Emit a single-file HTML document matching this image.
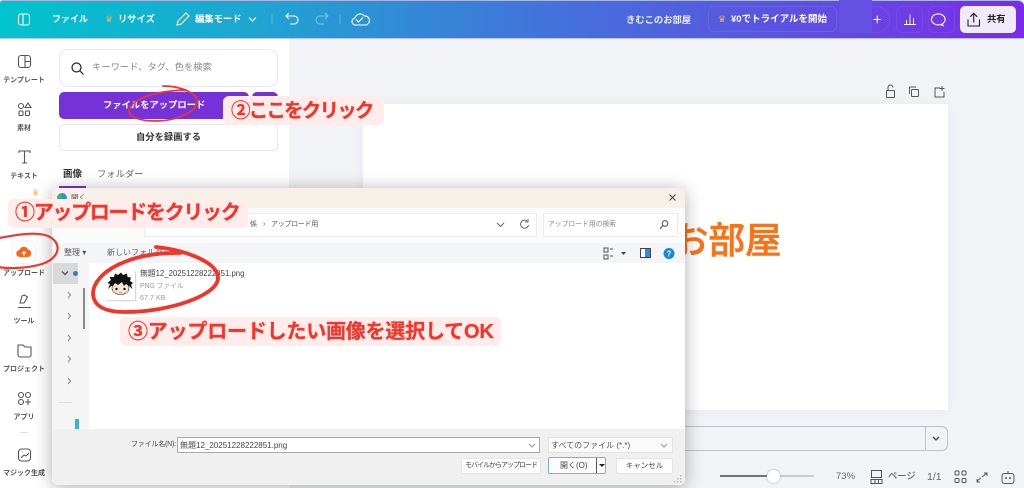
<!DOCTYPE html>
<html lang="ja"><head><meta charset="utf-8"><style>
html,body{margin:0;padding:0}
body{width:1024px;height:488px;overflow:hidden;position:relative;background:#f2f3f7;font-family:"Liberation Sans","Noto Sans CJK JP",sans-serif;color:#333;filter:blur(.3px)}
.a{position:absolute;white-space:nowrap;line-height:1}
.c{transform:translateX(-50%)}
svg{position:absolute;overflow:visible}
.w{color:#fff;font-weight:700}
.n{font-size:7px;font-weight:700;color:#555;left:24px}
.lb{position:absolute;background:#ffeceb;border-radius:6px}
.r{color:#f5352b;font-weight:700;position:absolute;white-space:nowrap;line-height:1;-webkit-text-stroke:.3px #f5352b}
.g{color:#666}
.btn{position:absolute;background:#fdfdfd;border:1px solid #e4e4e4;border-radius:2px;box-sizing:border-box;font-size:7px;text-align:center;color:#444}
</style></head><body>

<!-- top bar -->
<div class="a" style="left:0;top:0;width:1024px;height:38px;background:linear-gradient(90deg,#00c4cc 0%,#1fa5d2 25%,#3f78da 50%,#5a55e0 75%,#7d2ae8 100%);border-top:1px solid #a9b6e0;box-sizing:border-box;border-radius:3px 6px 0 0"></div>
<div class="a" style="left:0;top:38px;width:1024px;height:1px;background:#b9c4ea"></div>
<svg style="left:0;top:0" width="1024" height="38" fill="none" stroke="#fff" stroke-width="1.1">
<rect x="18.500" y="14" width="11" height="11" rx="2.500"/><path d="M23 14v11"/>
<path d="M177 25l1-4 8-8 3 3-8 8z"/>
<path d="M249 17.500l3.500 3.500 3.500-3.500"/>
<path d="M289 14l-3 3 3 3M286 17h8a4 4 0 0 1 0 8h-4" transform="translate(0,-1)"/>
<path d="M325 14l3 3-3 3M328 17h-8a4 4 0 0 0 0 8h4" transform="translate(0,-1)" opacity=".4"/>
<path d="M272 14v10M340 14v10" opacity=".25"/>
<path d="M356 25a3.500 3.500 0 0 1-1-7 5.500 5.500 0 0 1 9.500-2 4.500 4.500 0 0 1 1 9z"/><path d="M356 19.500l2.500 2.500 4.500-4.500"/>
<path d="M904 24.500h12M906.500 24v-4M910 24V14.500M913.500 24v-6" stroke-width=".9"/>
<path d="M944 26l-1-1.500a6.800 5.500 0 1 0-1.500.6z" transform="translate(-1,-.5)"/>
</svg>
<div class="a w" style="left:52px;top:14.500px;font-size:9px">ファイル</div>
<div class="a" style="left:105px;top:15px;font-size:9px;color:#f5b14a">♛</div>
<div class="a w" style="left:118px;top:14.500px;font-size:9.300px">リサイズ</div>
<div class="a w" style="left:195px;top:14.500px;font-size:9.300px">編集モード</div>
<div class="a w" style="left:626px;top:15.500px;font-size:9.300px;color:#e8ecfb">きむこのお部屋</div>
<div class="a" style="left:708px;top:6px;width:129px;height:26px;border:1px solid #6b62e4;border-radius:6px;box-sizing:border-box"></div>
<div class="a" style="left:718px;top:15px;font-size:9px;color:#f5b14a">♛</div>
<div class="a w" style="left:731px;top:14.500px;font-size:9.500px">¥0でトライアルを開始</div>
<div class="a" style="left:862px;top:6px;width:28px;height:27px;border:1px solid #7450e6;border-left:0;border-radius:0 14px 14px 0;box-sizing:border-box"></div>
<div class="a" style="left:839px;top:0;width:33px;height:33px;background:#6450e2"></div>
<svg style="left:0;top:0" width="1024" height="38" fill="none" stroke="#fff" stroke-width="1.1"><path d="M873.500 19.500h7.500M877.250 15.700v7.500"/></svg>
<div class="a" style="left:896px;top:6px;width:27px;height:27px;border:1px solid #7a48e8;border-radius:6px;box-sizing:border-box"></div>
<div class="a" style="left:928px;top:6px;width:27px;height:27px;border:1px solid #7c44e8;border-radius:6px;box-sizing:border-box"></div>
<div class="a" style="left:960px;top:6px;width:56px;height:27px;background:#f1eafb;border-radius:5px"></div>
<svg style="left:965px;top:10px" width="20" height="20" fill="none" stroke="#222" stroke-width="1.100"><path d="M3 9.500v6.500h11.500V9.500M8.700 12.500V3.500M5.200 6.800l3.500-3.500 3.500 3.500"/></svg>
<div class="a" style="left:987px;top:14.500px;font-size:9.300px;font-weight:700;color:#222">共有</div>

<!-- left panel -->
<div class="a" style="left:0;top:39px;width:289px;height:449px;background:#fff"></div>
<div class="a" style="left:59px;top:49px;width:219px;height:38px;border:1px solid #e8e6f8;border-radius:9px;box-sizing:border-box"></div>
<svg style="left:70px;top:61px" width="16" height="16" fill="none" stroke="#222" stroke-width="1.200"><circle cx="6.500" cy="6.500" r="4.500"/><path d="M10 10l3.500 3.500"/></svg>
<div class="a" style="left:92px;top:63px;font-size:9.300px;color:#888">キーワード、タグ、色を検索</div>
<div class="a" style="left:59px;top:92px;width:190px;height:27px;background:#7731d8;border-radius:5px"></div>
<div class="a" style="left:252px;top:92px;width:26px;height:27px;background:#7731d8;border-radius:5px"></div>
<div class="a w" style="left:103px;top:100.500px;font-size:9.300px">ファイルをアップロード</div>
<div class="a" style="left:59px;top:124px;width:219px;height:27px;background:#fff;border:1px solid #e6e6e6;border-radius:5px;box-sizing:border-box"></div>
<div class="a" style="left:136px;top:132.500px;font-size:9.300px;font-weight:700;color:#333">自分を録画する</div>
<div class="a" style="left:63px;top:170px;font-size:9.500px;font-weight:700;color:#333">画像</div>
<div class="a" style="left:97px;top:170px;font-size:9.300px;color:#666">フォルダー</div>
<div class="a" style="left:59px;top:186px;width:27px;height:2px;background:#7731d8"></div>

<!-- rail -->
<svg style="left:0;top:40px" width="50" height="448" fill="none" stroke="#555" stroke-width="1.100">
<rect x="18.500" y="15.500" width="12" height="12" rx="2.500"/><path d="M25 16v11M25 21.500h5"/>
<circle cx="21" cy="66" r="2.500"/><path d="M28 63l3 4.500h-6z"/><rect x="19" y="71" width="4" height="4.500" rx="1"/><rect x="25.500" y="71" width="4" height="4.500" rx="1"/>
<path d="M19 113v-2h11v2M24.500 111v12M22 123h5"/>
<path d="M20 264l2-7 2.500-1 3 2-3.500 6zM18 268.500h13" transform="translate(0,-1)"/>
<path d="M18 305h5l2 2h6v8a2 2 0 0 1-2 2H20a2 2 0 0 1-2-2z"/>
<circle cx="21" cy="355" r="2.500"/><circle cx="28" cy="355" r="2.500"/><circle cx="21" cy="362" r="2.500"/><path d="M28 359v6M25 362h6"/>
<rect x="18.500" y="409" width="12" height="12" rx="3"/><path d="M21 418l3-3 2 1 3-3M22 412h.5"/>
</svg>
<div class="a c n" style="top:77px">テンプレート</div>
<div class="a c n" style="top:125px">素材</div>
<div class="a c n" style="top:173px">テキスト</div>
<div class="a" style="left:32px;top:189px;font-size:8px;color:#f3b24c">♛</div>
<div class="a" style="left:13px;top:241px;width:22px;height:22px;background:#fff;border-radius:6px;box-shadow:0 0 2px #ddd"></div>
<svg style="left:16px;top:245px" width="16" height="14"><path d="M4 12a3.500 3.500 0 0 1-.5-7A4.500 4.500 0 0 1 12 4.500a3.800 3.800 0 0 1 0 7.500z" fill="#f9661e"/><path d="M8 11V7M6 8.500L8 6.500l2 2" stroke="#fff" fill="none" stroke-width="1.100"/></svg>
<div class="a c n" style="top:270px">アップロード</div>
<div class="a c n" style="top:318px">ツール</div>
<div class="a c n" style="top:366px">プロジェクト</div>
<div class="a c n" style="top:414px">アプリ</div>
<div class="a" style="left:20px;top:432px;width:8px;height:1px;background:#ddd"></div>
<div class="a c n" style="top:470px">マジック生成</div>

<!-- canvas -->
<div class="a" style="left:363px;top:104px;width:585px;height:306px;background:#fff;box-shadow:0 0 12px rgba(80,80,120,.06)"></div>
<svg style="left:880px;top:82px" width="70" height="20" fill="none" stroke="#555" stroke-width="1">
<rect x="6.500" y="8.500" width="8" height="7" rx="1"/><path d="M8 8V5.500a2.500 2.500 0 0 1 5 0"/>
<rect x="31.500" y="7.500" width="7" height="7" rx="1"/><path d="M29.500 12V6a1 1 0 0 1 1-1H36"/>
<path d="M60 6h-5v9h9v-5M62 4v5M59.500 6.500h5"/></svg>
<div class="a" style="left:672px;top:223px;font-size:36.500px;font-weight:500;color:#f97316;-webkit-text-stroke:.5px #f97316">お部屋</div>
<div class="a" style="left:600px;top:426px;width:348px;height:25px;border:1px solid #bfc2c9;border-radius:6px;box-sizing:border-box"></div>
<div class="a" style="left:925px;top:426px;width:1px;height:25px;background:#bfc2c9"></div>
<svg style="left:930px;top:434px" width="12" height="10" fill="none" stroke="#444" stroke-width="1.300"><path d="M3 3l3 3 3-3"/></svg>

<!-- bottom bar -->
<div class="a" style="left:720px;top:475px;width:94px;height:1.500px;background:#c9cbd2"></div>
<div class="a" style="left:720px;top:475px;width:50px;height:1.500px;background:#70727a"></div>
<div class="a" style="left:767px;top:470px;width:13px;height:13px;background:#fff;border-radius:50%;box-shadow:0 0 2px #999"></div>
<div class="a g" style="left:836px;top:471.500px;font-size:9.500px;font-weight:500">73%</div>
<svg style="left:870px;top:469px" width="150" height="18" fill="none" stroke="#555" stroke-width="1">
<rect x="1.500" y="1.500" width="10" height="7"/><path d="M1 10.500h11v4H1zM5 10.500v4M8.500 10.500v4"/>
<rect x="85" y="2" width="4" height="4" rx="1"/><rect x="92" y="2" width="4" height="4" rx="1"/><rect x="85" y="9.500" width="4" height="4" rx="1"/><rect x="92" y="9.500" width="4" height="4" rx="1"/>
<path d="M112 7l5-4M114 3h3v3M107 11l4-3M107 9v3h3" transform="translate(0,1)"/>
<rect x="132" y="4.500" width="12" height="10" rx="2.500"/><path d="M138 4.500V2"/><circle cx="136" cy="9" r=".5"/><circle cx="140" cy="9" r=".5"/></svg>
<div class="a g" style="left:888px;top:471.500px;font-size:9.300px;font-weight:500">ページ</div>
<div class="a g" style="left:927px;top:471.500px;font-size:10.500px;font-weight:500">1/1</div>

<!-- dialog -->
<div class="a" style="left:52px;top:188px;width:633px;height:297px;background:#fff;border-radius:6px;box-shadow:0 2px 18px rgba(0,0,0,.32);overflow:hidden">
  <div class="a" style="left:0;top:0;width:633px;height:20px;background:#f7f0e8"></div>
  <div class="a" style="left:5px;top:5px;width:10px;height:10px;border-radius:50%;background:conic-gradient(#2c8fd8 0 55%,#33b56b 55% 100%)"></div>
  <div class="a" style="left:19px;top:6px;font-size:7.500px;color:#555">開く</div>
  <svg style="left:616px;top:5px" width="10" height="10" fill="none" stroke="#444" stroke-width="1"><path d="M1.500 1.500l6 6M7.500 1.500l-6 6"/></svg>
  <div class="a" style="left:0;top:20px;width:633px;height:35px;background:#fbfbfc"></div>
  <div class="a" style="left:92px;top:25px;width:393px;height:24px;background:#fff;border:1px solid #ececec;box-sizing:border-box"></div>
  <div class="a" style="left:198px;top:33px;font-size:7px;color:#555">係</div>
  <div class="a" style="left:211px;top:33px;font-size:7px;color:#555">›</div>
  <div class="a" style="left:219px;top:33px;font-size:7px;letter-spacing:-.3px;color:#555">アップロード用</div>
  <svg style="left:444px;top:30px" width="60" height="14" fill="none" stroke="#666" stroke-width="1"><path d="M1 5l3.500 3.500L8 5"/><path d="M31 3a4 4 0 1 0 1.500 4M32 1v3h-3"/></svg>
  <div class="a" style="left:491px;top:25px;width:135px;height:24px;background:#fff;border:1px solid #ececec;box-sizing:border-box"></div>
  <div class="a" style="left:496px;top:33.500px;font-size:6.800px;color:#888">アップロード用の検索</div>
  <svg style="left:606px;top:31px" width="12" height="12" fill="none" stroke="#555" stroke-width="1.100"><circle cx="7" cy="4.500" r="2.800"/><path d="M5 6.500L2 10"/></svg>
  <div class="a" style="left:0;top:55px;width:633px;height:20px;background:#f4f5f7"></div>
  <div class="a" style="left:12px;top:61px;font-size:8px;color:#555">整理 ▾</div>
  <div class="a" style="left:55px;top:61px;font-size:8px;color:#666">新しいフォルダー</div>
  <svg style="left:550px;top:58px" width="78" height="15"><path d="M2 2h4v4H2zM2 9h4v4H2zM8 3h3M8 10h3" fill="none" stroke="#555"/><path d="M19 6h5l-2.500 3z" fill="#444"/><rect x="38.500" y="2.500" width="10" height="9" fill="#fff" stroke="#444"/><rect x="43" y="3" width="5" height="8" fill="#2b90d9"/><circle cx="67" cy="7.500" r="5.500" fill="#1a87dc"/><text x="67" y="10.500" font-size="8" font-weight="700" fill="#fff" text-anchor="middle">?</text></svg>
  <div class="a" style="left:0;top:75px;width:37px;height:166px;background:#f5f5f6"></div>
  <div class="a" style="left:1px;top:75px;width:25px;height:21px;background:#d9d9d9"></div>
  <svg style="left:7px;top:80px" width="22" height="130" fill="none" stroke="#888" stroke-width="1">
    <path d="M3 3.500l3 3 3-3" stroke="#444" stroke-width="1.200"/><circle cx="16.500" cy="5.500" r="2.500" fill="#2a7be0" stroke="none"/>
    <path d="M9 24l2.500 3L9 30M9 45l2.500 3L9 51M9 67l2.500 3L9 73M9 88l2.500 3L9 94M9 110l2.500 3L9 116"/></svg>
  <div class="a" style="left:31px;top:100px;width:2px;height:41px;background:#8a8a8a"></div>
  <div class="a" style="left:7px;top:214px;width:13px;height:1px;background:#ddd"></div>
  <div class="a" style="left:23px;top:231px;width:4px;height:10px;background:#38b6d8"></div>
  <div class="a" style="left:0;top:241px;width:633px;height:56px;background:#f0f0f0"></div>
  <div class="a" style="left:79px;top:253px;font-size:7px;letter-spacing:-.2px;color:#444">ファイル名(N):</div>
  <div class="a" style="left:125px;top:249px;width:363px;height:16px;background:#fff;border:1px solid #aaa;box-sizing:border-box;font-size:8px;line-height:15px;padding-left:2px;color:#444">無題12_20251228222851.png</div>
  <svg style="left:476px;top:254px" width="10" height="8" fill="none" stroke="#999"><path d="M1 2l3 3 3-3"/></svg>
  <div class="a" style="left:496px;top:249px;width:125px;height:16px;background:#fafafa;border:1px solid #e2e2e2;box-sizing:border-box;font-size:8px;line-height:15px;padding-left:2px;color:#555">すべてのファイル (*.*)</div>
  <svg style="left:608px;top:254px" width="10" height="8" fill="none" stroke="#999"><path d="M1 2l3 3 3-3"/></svg>
  <div class="btn" style="left:409px;top:270px;width:80px;height:16px;line-height:14px;letter-spacing:-1px">モバイルからアップロード</div>
  <div class="btn" style="left:496px;top:269px;width:58px;height:17px;line-height:15px;border-color:#7ab0dc;text-align:left;padding-left:11px;font-size:8px">開く(O)</div>
  <div class="a" style="left:544px;top:270px;width:1px;height:15px;background:#555"></div>
  <svg style="left:546px;top:275px" width="8" height="6"><path d="M1 1h6L4 4z" fill="#222"/></svg>
  <div class="btn" style="left:564px;top:270px;width:57px;height:16px;line-height:14px;font-size:7.500px">キャンセル</div>
  <svg style="left:622px;top:287px" width="9" height="9" fill="#bbb"><rect x="6" y="0" width="1.500" height="1.500"/><rect x="3" y="3" width="1.500" height="1.500"/><rect x="6" y="3" width="1.500" height="1.500"/><rect x="0" y="6" width="1.500" height="1.500"/><rect x="3" y="6" width="1.500" height="1.500"/><rect x="6" y="6" width="1.500" height="1.500"/></svg>
  <div class="a" style="left:53px;top:82px;width:30px;height:30px;background:#fff;box-shadow:1px 1px 1px #ccc"></div>
  <svg style="left:54px;top:84px" width="28" height="28">
    <ellipse cx="14.500" cy="16" rx="8.500" ry="6.500" fill="#f8e6d2" stroke="#222" stroke-width=".6"/>
    <path d="M2 17L4 12 1.500 11 5 8 3.500 5 8 5 9 1.500 12 3 15 .5 17 3 21 1.500 21.500 5 25 5.500 24 9 27 11 25 13 26.500 17 23 14 20 12 18 14 16 10 12 13 9 11 7 14 5 14z" fill="#111"/>
    <circle cx="10.500" cy="17" r="1.200" fill="#111"/><circle cx="18.500" cy="17" r="1.200" fill="#111"/>
    <ellipse cx="8" cy="20" rx="1.500" ry="1" fill="#f5a5a5"/><ellipse cx="21" cy="20" rx="1.500" ry="1" fill="#f5a5a5"/><path d="M13 20.500h3" stroke="#c33" stroke-width=".6"/></svg>
  <div class="a" style="left:88px;top:82px;font-size:7.800px;color:#444">無題12_20251228222851.png</div>
  <div class="a" style="left:88px;top:94.500px;font-size:7px;letter-spacing:-.2px;color:#999">PNG ファイル</div>
  <div class="a" style="left:88px;top:105.500px;font-size:7.200px;color:#999">67.7 KB</div>
</div>

<!-- annotations -->
<div class="lb" style="left:8px;top:199px;width:240px;height:29px"></div>
<div class="r" style="left:15px;top:203px;font-size:20px;letter-spacing:-1.300px">①アップロードをクリック</div>
<div class="lb" style="left:223px;top:96px;width:161px;height:29px"></div>
<div class="r" style="left:231px;top:102px;font-size:19.500px;letter-spacing:-1.800px">②ここをクリック</div>
<div class="lb" style="left:120px;top:317px;width:381px;height:29px"></div>
<div class="r" style="left:128px;top:322px;font-size:20px;letter-spacing:-.2px">③アップロードしたい画像を選択してOK</div>
<svg style="left:0;top:0" width="1024" height="488" fill="none" stroke="#f0352b" stroke-linecap="round">
<path d="M163 86C180 86 198 93 197 102 196 113 175 121 155 121 140 121 129 117 129 111 130 101 150 91 186 90" stroke-width="1.700"/>
<path d="M-6 239C15 235 35 231 48 236 63 243 60 258 42 264 25 269 5 269 -8 266" stroke-width="2.200"/>
<path d="M156 247C185 250 218 262 218 278 218 295 170 312 125 312 105 312 93 306 93 293 94 272 130 252 180 253" stroke-width="3.800"/>
</svg>
</body></html>
